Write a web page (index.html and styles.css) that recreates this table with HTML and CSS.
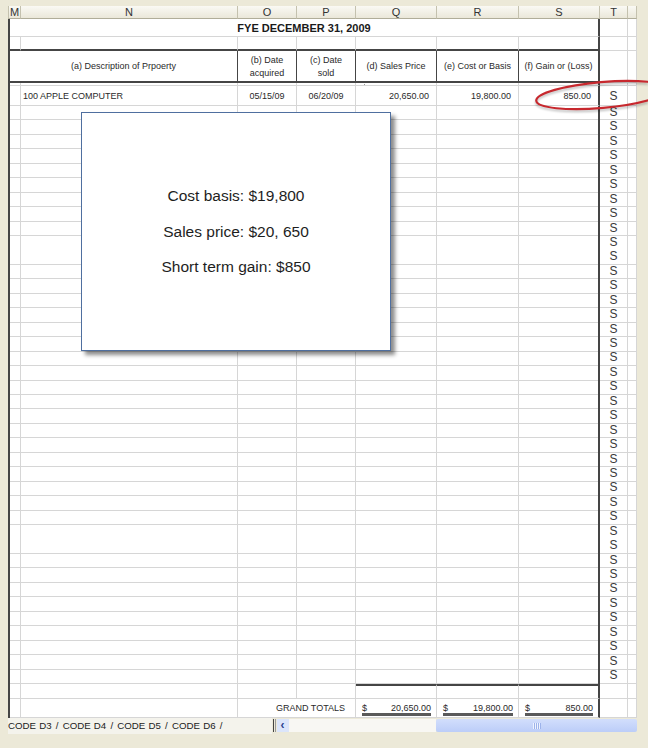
FILE: index.html
```html
<!DOCTYPE html>
<html>
<head>
<meta charset="utf-8">
<link rel="stylesheet" href="styles.css">
</head>
<body>
<div class="window">
  <div class="sheet">
    <div class="colheads">
      <div>M</div><div>N</div><div>O</div><div>P</div><div>Q</div><div>R</div><div>S</div><div>T</div><div></div>
    </div>
    <div class="body">
      <div class="grid top">
        <div class="c title">FYE DECEMBER 31, 2009</div><div class="c"></div><div class="c"></div>

        <div class="c thickb"></div><div class="c thickb"></div><div class="c thickb"></div><div class="c thickb"></div><div class="c thickb"></div><div class="c thickb"></div><div class="c thickb sr"></div><div class="c"></div><div class="c"></div>

        <div class="c hd desc">(a) Description of Prpoerty</div>
        <div class="c hd two"><span>(b) Date</span><span>acquired</span></div>
        <div class="c hd two"><span>(c) Date</span><span>sold</span></div>
        <div class="c hd">(d) Sales Price</div>
        <div class="c hd">(e) Cost or Basis</div>
        <div class="c hd sr">(f) Gain or (Loss)</div>
        <div class="c"></div><div class="c"></div>

        <div class="c"></div><div class="c"></div><div class="c"></div><div class="c"></div><div class="c"><i class="dot"></i></div><div class="c"></div><div class="c sr"></div><div class="c"></div><div class="c"></div>

        <div class="c"></div>
        <div class="c txt">100 APPLE COMPUTER</div>
        <div class="c ctr">05/15/09</div>
        <div class="c ctr">06/20/09</div>
        <div class="c num">20,650.00</div>
        <div class="c num">19,800.00</div>
        <div class="c num sr">850.00</div>
        <div class="c s">S</div>
        <div class="c"></div>
      </div>

      <div class="filler">
        <div></div><div></div><div></div><div></div><div></div><div></div><div class="sr"></div>
        <div class="scol">
          <span>S</span><span>S</span><span>S</span><span>S</span><span>S</span><span>S</span><span>S</span><span>S</span><span>S</span><span>S</span>
          <span>S</span><span>S</span><span>S</span><span>S</span><span>S</span><span>S</span><span>S</span><span>S</span><span>S</span><span>S</span>
          <span>S</span><span>S</span><span>S</span><span>S</span><span>S</span><span>S</span><span>S</span><span>S</span><span>S</span><span>S</span>
          <span>S</span><span>S</span><span>S</span><span>S</span><span>S</span><span>S</span><span>S</span><span>S</span><span>S</span><span>S</span>
        </div>
        <div></div>
      </div>

      <div class="grid bottom">
        <div class="c"></div><div class="c"></div><div class="c"></div><div class="c"></div><div class="c thickt"></div><div class="c thickt"></div><div class="c thickt sr"></div><div class="c"></div><div class="c"></div>

        <div class="c"></div><div class="c"></div>
        <div class="c gt">GRAND TOTALS</div>
        <div class="c tot"><span class="amt"><b>$</b><b>20,650.00</b></span></div>
        <div class="c tot"><span class="amt"><b>$</b><b>19,800.00</b></span></div>
        <div class="c tot sr"><span class="amt"><b>$</b><b>850.00</b></span></div>
        <div class="c"></div><div class="c"></div>
      </div>
    </div>
  </div>

  <div class="tabbar">
    <div class="tabs"><span class="tabrow">CODE D3 <i>/</i> CODE D4 <i>/</i> CODE D5 <i>/</i> CODE D6 <i>/</i></span></div>
    <div class="split"></div>
    <div class="btn">&lsaquo;</div>
    <div class="track"></div>
    <div class="thumb"><i class="grip"></i></div>
  </div>

  <div class="popup">
    <p>Cost basis: $19,800</p>
    <p>Sales price: $20, 650</p>
    <p>Short term gain: $850</p>
  </div>

  <svg class="circle" width="128" height="50" viewBox="0 0 128 50">
    <ellipse cx="82" cy="25" rx="66" ry="13" transform="rotate(-5 82 25)" fill="none" stroke="#c7282e" stroke-width="2.2"/>
  </svg>
</div>
</body>
</html>
```

FILE: styles.css
```css
html, body {
  margin: 0;
  padding: 0;
}
body {
  background: #ece9d8;
  font-family: "Liberation Sans", Arial, sans-serif;
  color: #222;
}
.window {
  position: relative;
  width: 648px;
  height: 748px;
  padding: 6px 0 0 8px;
  box-sizing: border-box;
  overflow: hidden;
}
.sheet {
  width: 629px;
  background: #fff;
}
.colheads {
  display: grid;
  grid-template-columns: 13px 217px 59px 59px 81px 82px 81px 28px 9px;
  height: 13px;
  background: linear-gradient(#faf9f4, #e9e6d7);
}
.colheads div {
  box-sizing: border-box;
  border-right: 1px solid #c4c1ae;
  border-bottom: 1px solid #b0ad99;
  font-size: 11px;
  line-height: 12px;
  text-align: center;
  color: #333;
}
.colheads div:first-child {
  border-left: 1px solid #c4c1ae;
  text-align: left;
  padding-left: 1px;
}
.body {
  border-left: 2px solid #454545;
}
.grid {
  display: grid;
  grid-template-columns: 11px 217px 59px 59px 81px 82px 81px 28px 9px;
}
.top {
  grid-template-rows: 18px 14px 32px 3px 20px;
}
.bottom {
  grid-template-rows: 15px 19px;
}
.c {
  box-sizing: border-box;
  border-right: 1px solid #d6d6d6;
  border-bottom: 1px solid #d6d6d6;
  font-size: 9px;
  color: #2a2a2a;
  white-space: nowrap;
  overflow: hidden;
  min-width: 0;
}
.title {
  grid-column: span 7;
  border-right: 2px solid #454545;
  text-align: center;
  font-weight: bold;
  font-size: 11px;
  line-height: 18px;
  color: #1a1a1a;
}
.thickb {
  border-bottom: 2px solid #454545;
}
.thickt {
  border-top: 2px solid #454545;
}
.sr {
  border-right: 2px solid #454545 !important;
}
.hd {
  border-right: 1.5px solid #454545;
  border-bottom: 2px solid #454545;
  display: flex;
  align-items: center;
  justify-content: center;
  font-size: 9px;
}
.desc {
  grid-column: span 2;
}
.two {
  flex-direction: column;
  justify-content: space-around;
  padding: 2px 0 1px;
}
.dot {
  display: block;
  width: 1px;
  height: 1px;
  margin: 1px 0 0 8px;
  background: #999;
}
.txt {
  padding-left: 2px;
  line-height: 20px;
}
.ctr {
  text-align: center;
  line-height: 20px;
}
.num {
  text-align: right;
  padding-right: 7px;
  line-height: 20px;
}
.s {
  text-align: center;
  font-size: 12px;
  line-height: 20px;
  color: #3a3a3a;
}
.filler {
  display: grid;
  grid-template-columns: 11px 217px 59px 59px 81px 82px 81px 28px 9px;
  height: 578px;
}
.filler > div {
  box-sizing: border-box;
  border-right: 1px solid #d6d6d6;
  background: repeating-linear-gradient(to bottom, transparent 0, transparent 13.45px, #d6d6d6 13.45px, #d6d6d6 14.45px);
}
.scol span {
  display: block;
  height: 14.45px;
  line-height: 13px;
  text-align: center;
  font-size: 12px;
  color: #3a3a3a;
}
.gt {
  grid-column: span 2;
  text-align: right;
  padding-right: 10px;
  line-height: 18px;
}
.tot {
  padding: 0 5px 0 6px;
}
.amt {
  display: flex;
  justify-content: space-between;
  margin-top: 4px;
  height: 10px;
  line-height: 10px;
  border-bottom: 3px solid #5a5a5a;
}
.amt b {
  font-weight: normal;
}
.tabbar {
  display: flex;
  width: 629px;
  height: 16px;
}
.tabs {
  width: 264px;
  background: #f4f3ec;
  overflow: hidden;
  font-size: 9.7px;
  line-height: 16px;
  color: #222;
  white-space: nowrap;
}
.tabrow {
  display: inline-block;
  margin-left: 0;
  word-spacing: 0.5px;
}
.tabrow i {
  font-style: normal;
  margin: 0 1px;
}
.split {
  width: 3px;
  margin: 1px 1px 2px;
  border-left: 1px solid #444;
  border-right: 1px solid #999;
  box-sizing: border-box;
}
.btn {
  width: 12px;
  margin: 1px 0 2px;
  background: #dbe5fb;
  color: #2a3f8f;
  font-size: 12px;
  line-height: 12px;
  text-align: center;
  font-weight: bold;
}
.track {
  width: 148px;
  margin: 1px 0 2px;
  background: #f8f7f3;
}
.thumb {
  width: 201px;
  margin: 1px 0 2px;
  background: linear-gradient(#d2defc, #bccdf8);
  border-radius: 2px;
  display: flex;
  justify-content: center;
  align-items: center;
}
.grip {
  width: 8px;
  height: 6px;
  background: repeating-linear-gradient(to right, #eef3ff 0 1px, #9db3ea 1px 2px);
}
.popup {
  position: absolute;
  left: 81px;
  top: 112px;
  width: 310px;
  height: 239px;
  box-sizing: border-box;
  border: 1px solid #4f6f9f;
  background: #fff;
  box-shadow: 4px 4px 4px rgba(0, 0, 0, 0.45);
  display: flex;
  flex-direction: column;
  justify-content: center;
  align-items: center;
}
.popup p {
  margin: 0;
  font-size: 15.5px;
  line-height: 35.5px;
  color: #1e1e1e;
}
.circle {
  position: absolute;
  left: 520px;
  top: 70px;
  filter: drop-shadow(0 2px 1px rgba(0, 0, 0, 0.25));
}
```
